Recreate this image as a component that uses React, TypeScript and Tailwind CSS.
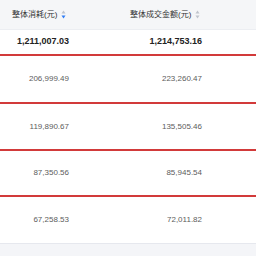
import React from "react";

const rows = [
  { cost: "206,999.49", amount: "223,260.47", h: "h-[48px]" },
  { cost: "119,890.67", amount: "135,505.46", h: "h-[47px]" },
  { cost: "87,350.56", amount: "85,945.54", h: "h-[46px]" },
  { cost: "67,258.53", amount: "72,011.82", h: "h-[47px]" },
];

// tiny up/down caret used in table headers
const SortIcon = ({ active }: { active?: boolean }) => (
  <svg width="5" height="9" viewBox="0 0 5 9" className="ml-[4px]">
    <path d="M2.5 0.5 L4.5 3.5 L0.5 3.5 Z" fill="#c0c4cc" />
    <path d="M2.5 8.5 L4.5 5.5 L0.5 5.5 Z" fill={active ? "#2f7cf6" : "#c0c4cc"} />
  </svg>
);

export default function App() {
  return (
    <div
      className="w-[256px] h-[256px] overflow-hidden bg-[#f4f5f8] text-[#333]"
      style={{ fontFamily: '"Liberation Sans", "Noto Sans CJK SC", sans-serif' }}
    >
      <div className="bg-white">
        {/* header */}
        <div className="grid grid-cols-[128px_128px] h-[30px] bg-[#f5f6f8] border-b border-[#eceef2] text-[8px] text-[#333]">
          <div className="flex items-center pl-[12px]">
            整体消耗(元)
            <SortIcon active />
          </div>
          <div className="flex items-center pl-[2px]">
            整体成交金额(元)
            <SortIcon />
          </div>
        </div>

        {/* total */}
        <div className="grid grid-cols-[128px_128px] h-[26px] items-center text-[9px] font-bold text-[#222] border-b-2 border-[#d23a3a]">
          <div className="w-[69px] text-right">1,211,007.03</div>
          <div className="w-[74px] text-right">1,214,753.16</div>
        </div>

        {rows.map((r, i) => (
          <div
            key={r.cost}
            className={
              "grid grid-cols-[128px_128px] items-center text-[8px] text-[#5c5c5c] " +
              r.h +
              " " +
              (i === rows.length - 1 ? "border-b border-[#e6e8ee]" : "border-b-2 border-[#d23a3a]")
            }
          >
            <div className="w-[69px] text-right">{r.cost}</div>
            <div className="w-[74px] text-right">{r.amount}</div>
          </div>
        ))}
      </div>
    </div>
  );
}
